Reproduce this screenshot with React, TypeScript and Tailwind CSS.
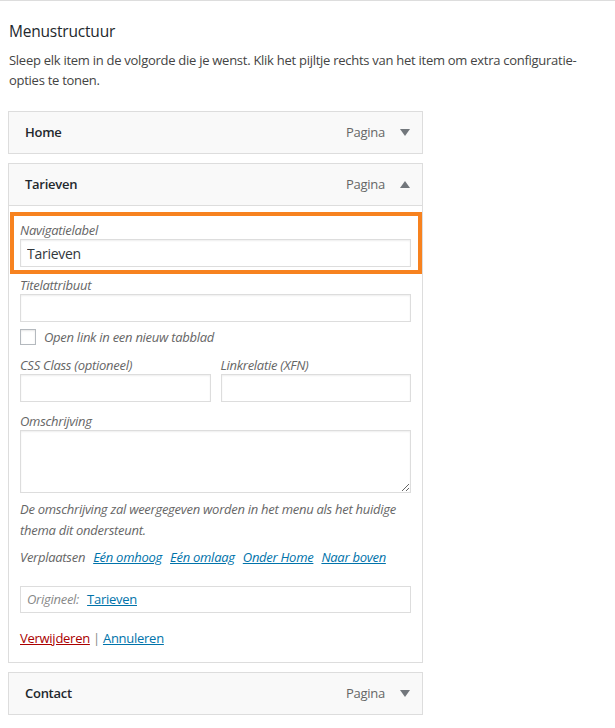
import type { ReactNode } from "react";

const font = { fontFamily: '"Open Sans", "Noto Sans", sans-serif' };

function Caret({ up }: { up?: boolean }) {
  return (
    <svg width="10" height="7" viewBox="0 0 10 7" className="text-[#72777c]">
      {up ? (
        <path d="M0 7 L5 0 L10 7 Z" fill="currentColor" />
      ) : (
        <path d="M0 0 L10 0 L5 7 Z" fill="currentColor" />
      )}
    </svg>
  );
}

function ItemHeader({ title, open }: { title: string; open?: boolean }) {
  return (
    <div className="flex h-[41px] items-center justify-between bg-[#f9f9f9] pl-4 pr-3">
      <span className="text-[13px] font-semibold text-[#23282d]">{title}</span>
      <div className="flex items-center gap-[15px]">
        <span className="text-[13px] text-[#666]">Pagina</span>
        <Caret up={open} />
      </div>
    </div>
  );
}

function Field({ label, children }: { label: string; children?: ReactNode }) {
  return (
    <div>
      <label className="block h-[18px] text-[13px] italic leading-[18px] text-[#666]">
        {label}
      </label>
      {children ?? (
        <input
          readOnly
          className="block h-[28px] w-full border border-[#ddd] bg-white px-[6px] text-[14px] text-[#32373c] shadow-[inset_0_1px_2px_rgba(0,0,0,0.07)] outline-none"
        />
      )}
    </div>
  );
}

export default function App() {
  return (
    <div className="min-h-[728px] border-t border-[#ddd] bg-white px-2 tracking-[-0.27px]" style={font}>
      <h3 className="mt-[19px] pl-px text-[15.5px] leading-[22px] tracking-[-0.2px] text-[#23282d]">Menustructuur</h3>
      <p className="mt-[8px] pl-px text-[13px] leading-[20px] text-[#444]">
        Sleep elk item in de volgorde die je wenst. Klik het pijltje rechts van het item om extra configuratie-
        <br />
        opties te tonen.
      </p>

      <div className="mt-[21px] w-[415px]">
        <div className="border border-[#ddd]">
          <ItemHeader title="Home" />
        </div>

        <div className="mt-[9px] border border-[#ddd]">
          <ItemHeader title="Tarieven" open />
          <div className="border-t border-[#ddd] bg-white px-[11px] pb-[14px] pt-[15px]">
            <div className="relative">
              <div className="pointer-events-none absolute -bottom-[7px] -left-[10px] -right-[11px] -top-[9px] border-4 border-[#f7821f]" />
              <Field label="Navigatielabel">
                <input
                  readOnly
                  value="Tarieven"
                  className="block h-[28px] w-full border border-[#ddd] bg-white px-[6px] text-[14px] text-[#32373c] shadow-[inset_0_1px_2px_rgba(0,0,0,0.07)] outline-none"
                />
              </Field>
            </div>

            <div className="mt-[9px]">
              <Field label="Titelattribuut" />
            </div>

            <div className="mt-[7px] flex items-center gap-2">
              <span className="block h-4 w-4 border border-[#b4b9be] bg-white shadow-[inset_0_1px_2px_rgba(0,0,0,0.1)]" />
              <span className="text-[13px] italic leading-[16px] text-[#666]">Open link in een nieuw tabblad</span>
            </div>

            <div className="mt-[11px] grid grid-cols-2 gap-[10px]">
              <Field label="CSS Class (optioneel)" />
              <Field label="Linkrelatie (XFN)" />
            </div>

            <div className="mt-[10px]">
              <Field label="Omschrijving">
                <textarea
                  readOnly
                  className="block h-[63px] w-full border border-[#ddd] bg-white shadow-[inset_0_1px_2px_rgba(0,0,0,0.07)] outline-none"
                />
              </Field>
            </div>

            <p className="mt-[6px] text-[13px] italic leading-[21px] text-[#666]">
              De omschrijving zal weergegeven worden in het menu als het huidige thema dit ondersteunt.
            </p>

            <div className="mt-[6px] flex gap-2 text-[13px] italic leading-[20px] text-[#666]">
              <span>Verplaatsen</span>
              {["Eén omhoog", "Eén omlaag", "Onder Home", "Naar boven"].map((t) => (
                <a key={t} href="#" className="text-[#0073aa] underline">
                  {t}
                </a>
              ))}
            </div>

            <div className="mt-[19px] flex h-[27px] items-center gap-2 border border-[#ddd] px-[6px] text-[13px]">
              <span className="italic text-[#888]">Origineel:</span>
              <a href="#" className="text-[#0073aa] underline">
                Tarieven
              </a>
            </div>

            <div className="mt-[15px] text-[13px] leading-[20px] text-[#888]">
              <a href="#" className="text-[#a00] underline">
                Verwijderen
              </a>{" "}
              |{" "}
              <a href="#" className="text-[#0073aa] underline">
                Annuleren
              </a>
            </div>
          </div>
        </div>

        <div className="mt-[9px] border border-[#ddd]">
          <ItemHeader title="Contact" />
        </div>
      </div>
    </div>
  );
}
